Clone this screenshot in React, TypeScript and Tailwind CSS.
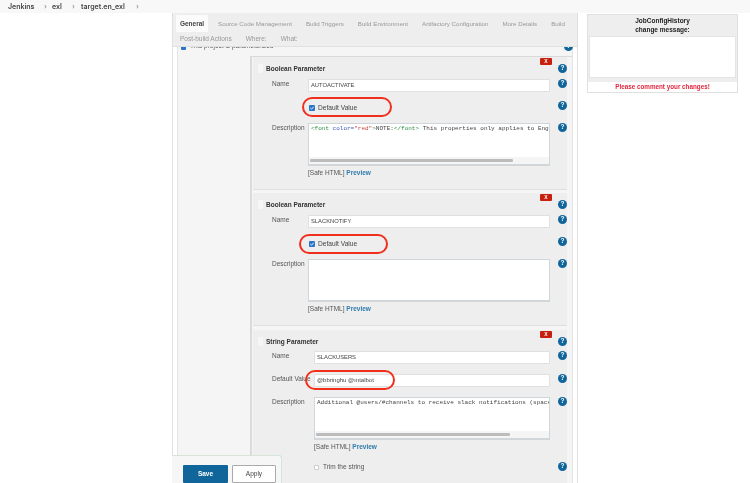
const font = "font-['Liberation_Sans',sans-serif]";

function Help() {
  return (
    <span className="flex h-[9px] w-[9px] shrink-0 items-center justify-center rounded-full bg-[#10659b] text-[6.5px] font-bold leading-none text-white">
      ?
    </span>
  );
}

function Ring({ className }: { className: string }) {
  return <div className={`pointer-events-none absolute h-[20px] rounded-[10px] border-2 border-[#f0301c] ${className}`} />;
}

function Check() {
  return (
    <span className="flex h-[6px] w-[6px] shrink-0 items-center justify-center rounded-[1px] bg-[#2a74c9]">
      <svg viewBox="0 0 6 6" className="h-[6px] w-[6px]">
        <path d="M1.3 3 L2.5 4.2 L4.7 1.8" fill="none" stroke="white" strokeWidth="0.9" />
      </svg>
    </span>
  );
}

function Row({ label, wide, top, height, children }: { label?: string; wide?: boolean; top: number; height: number; children: React.ReactNode }) {
  return (
    <div className="flex" style={{ marginTop: top, height }}>
      <div className={`shrink-0 whitespace-nowrap pl-[19px] text-[6.5px] leading-[9px] text-[#555] ${wide ? "w-[61px]" : "w-[55px]"}`}>
        {label}
      </div>
      <div className={`relative shrink-0 ${wide ? "w-[236px]" : "w-[242px]"}`}>{children}</div>
      <div className="ml-[8px]"><Help /></div>
    </div>
  );
}

function TextInput({ value, size }: { value: string; size: string }) {
  return (
    <div className={`flex h-[13px] items-center whitespace-nowrap rounded-[1px] border border-[#e0e0e0] bg-white pl-[2px] text-[#444] ${size}`}>
      {value}
    </div>
  );
}

function Editor({ children, scrollbar }: { children?: React.ReactNode; scrollbar?: number }) {
  return (
    <div className="h-[43px] overflow-hidden border border-b-2 border-[#d0d6da] bg-white">
      <div className="h-[33px] overflow-hidden whitespace-nowrap pl-[2px] pt-[1px] font-['Liberation_Mono',monospace] text-[6px] leading-[8px] text-[#444]">
        {children}
      </div>
      {scrollbar ? (
        <div className="h-[7px] bg-[#f5f5f5] pl-[1px] pt-[2px]">
          <div className="h-[3px] rounded-[1px] bg-[#bcbcbc]" style={{ width: scrollbar }} />
        </div>
      ) : null}
    </div>
  );
}

function SafeHtml({ wide }: { wide?: boolean }) {
  return (
    <div className={`mt-[2px] h-[9px] whitespace-nowrap text-[6.5px] leading-[9px] text-[#555] ${wide ? "ml-[61px]" : "ml-[55px]"}`}>
      [Safe HTML] <span className="font-bold text-[#2f7cad]">Preview</span>
    </div>
  );
}

function Block({ title, children }: { title: string; children: React.ReactNode }) {
  return (
    <div className="relative w-[314px] border-b border-[#e0e0e0]">
      <div className="absolute right-[15px] top-[1px] flex h-[7px] w-[12px] items-center justify-center rounded-[1px] bg-[#c8200f] text-[5px] font-bold text-white">
        X
      </div>
      <div className="flex h-[16px] items-end pl-[5px]">
        <span className="mr-[3px] h-[9px] w-[5px] bg-[#f5f5f5]" />
        <span className="mb-[-1px] whitespace-nowrap text-[6.5px] font-bold leading-[10px] text-[#333]">{title}</span>
        <span className="ml-auto"><Help /></span>
      </div>
      {children}
    </div>
  );
}

function DefaultCheck() {
  return (
    <div className="flex h-[13px] items-center whitespace-nowrap pl-[1px] text-[6.6px] text-[#444]">
      <span className="mr-[3px]"><Check /></span>
      Default Value
    </div>
  );
}

export default function App() {
  return (
    <div className={`relative flex h-[483px] w-[750px] flex-col overflow-hidden bg-white blur-[0.3px] ${font}`}>
      {/* Breadcrumb */}
      <div className="flex h-[13px] shrink-0 items-center whitespace-nowrap bg-[#f8f8f8] pl-[8px] font-['Inter',sans-serif] text-[7px] font-semibold leading-[10px] text-[#444]">
        <span className="w-[36px]">Jenkins</span>
        <span className="w-[8px] text-[#999]">›</span>
        <span className="w-[20px]">exl</span>
        <span className="w-[9px] text-[#999]">›</span>
        <span className="w-[55px]">target.en_exl</span>
        <span className="text-[#999]">›</span>
      </div>

      <div className="flex min-h-0 flex-1">
        <div className="w-[172px] shrink-0" />

        {/* Main config form */}
        <div className="relative flex h-full w-[406px] shrink-0 flex-col border-x border-[#e0e0e0]">
          <div className="relative z-10 h-[34px] shrink-0 border-b border-[#e0e0e0] bg-[#eeeeee] pl-[3px] pt-[2px] text-[6.5px] text-[#999]">
            <div className="flex h-[17px] items-center gap-[14px] whitespace-nowrap text-[6.2px]">
              <span className="mr-[-4px] flex h-[17px] w-[32px] items-center justify-center rounded-t-[2px] bg-[#fbfbfb] text-[6.5px] font-bold text-[#444]">General</span>
              <span>Source Code Management</span>
              <span>Build Triggers</span>
              <span>Build Environment</span>
              <span>Artifactory Configuration</span>
              <span>More Details</span>
              <span>Build</span>
            </div>
            <div className="flex h-[13px] items-center gap-[14px] whitespace-nowrap pl-[4px]">
              <span>Post-build Actions</span>
              <span>Where:</span>
              <span>What:</span>
            </div>
          </div>

          <div className="min-h-0 flex-1 overflow-hidden px-[4px]">
            <div className="h-full border-x border-[#e4e4e4] bg-[#f5f5f5]">
              <div className="flex h-[3px] items-end overflow-visible pl-[3px] text-[6.5px] leading-[8px] text-[#555]">
                <span className="mr-[4px] h-[5px] w-[5px] shrink-0 rounded-[1px] bg-[#2a74c9]" />
                <span className="whitespace-nowrap">This project is parameterized</span>
                <span className="mb-[-1px] ml-auto mr-[-1px]"><Help /></span>
              </div>
              <div className="ml-[72px] mt-[6px] h-[430px] border-l-[2px] border-t border-[#dadada] pl-[1px]">
                <div className="w-[314px] bg-[#eeeeee]">
                  <Block title="Boolean Parameter">
                    <Row label="Name" top={6} height={13}><TextInput value="AUTOACTIVATE" size="text-[5.8px]" /></Row>
                    <Row top={9} height={13}>
                      <DefaultCheck />
                      <Ring className="-left-[6px] -top-[4px] w-[90px]" />
                    </Row>
                    <Row label="Description" top={9} height={43}>
                      <Editor scrollbar={203}>
                        <span className="text-[#2f8f45]">&lt;font </span>
                        <span className="text-[#3c5bc4]">color=</span>
                        <span className="text-[#c9483c]">"red"</span>
                        <span className="text-[#2f8f45]">&gt;</span>NOTE:
                        <span className="text-[#2f8f45]">&lt;/font&gt;</span> This properties only applies to Eng
                      </Editor>
                    </Row>
                    <SafeHtml />
                    <div className="h-[12px]" />
                  </Block>
                  <div className="h-[3px] bg-[#f5f5f5]" />
                  <Block title="Boolean Parameter">
                    <Row label="Name" top={6} height={13}><TextInput value="SLACKNOTIFY" size="text-[5.8px]" /></Row>
                    <Row top={9} height={13}>
                      <DefaultCheck />
                      <Ring className="-left-[9px] -top-[3px] w-[89px]" />
                    </Row>
                    <Row label="Description" top={9} height={43}><Editor /></Row>
                    <SafeHtml />
                    <div className="h-[12px]" />
                  </Block>
                  <div className="h-[4px] bg-[#f5f5f5]" />
                  <Block title="String Parameter">
                    <Row label="Name" wide top={5} height={13}><TextInput value="SLACKUSERS" size="text-[5.8px]" /></Row>
                    <Row label="Default Value" wide top={10} height={13}>
                      <TextInput value="@bbringhu @mtalbot" size="text-[6px]" />
                      <Ring className="-left-[9px] -top-[4px] w-[90px]" />
                    </Row>
                    <Row label="Description" wide top={10} height={43}>
                      <Editor scrollbar={194}>Additional @users/#channels to receive slack notifications (space</Editor>
                    </Row>
                    <SafeHtml wide />
                    <Row wide top={11} height={30}>
                      <div className="flex h-[10px] items-center whitespace-nowrap text-[6.5px] text-[#555]">
                        <span className="mr-[4px] h-[5px] w-[5px] rounded-[1px] border border-[#ccc] bg-white" />
                        Trim the string
                      </div>
                    </Row>
                  </Block>
                </div>
              </div>
            </div>
          </div>
        </div>

        {/* JobConfigHistory panel */}
        <div className="ml-[9px] w-[151px] shrink-0 pt-[1px]">
          <div className="border border-[#e0e0e0]">
            <div className="bg-[#eeeeee] px-[1px] pb-[4px] pt-[1px] text-center text-[6.5px] font-bold leading-[9px] text-[#222]">
              <div className="h-[9px]">JobConfigHistory</div>
              <div className="h-[9px]">change message:</div>
              <div className="mt-[2px] h-[42px] border border-[#e4e4e4] bg-white" />
            </div>
            <div className="flex h-[10px] items-center justify-center bg-white text-[6.3px] font-bold text-[#e0263c]">
              Please comment your changes!
            </div>
          </div>
        </div>
      </div>

      {/* Sticky save bar */}
      <div className="absolute bottom-0 left-[172px] flex h-[28px] w-[110px] gap-[4px] rounded-tr-[3px] border-r border-t border-[#d5e5d7] bg-[#f6f6f6] pl-[11px] pt-[9px]">
        <div className="flex h-[18px] w-[45px] items-center justify-center rounded-[1px] bg-[#10659b] text-[6.5px] font-bold text-white">Save</div>
        <div className="flex h-[18px] w-[44px] items-center justify-center rounded-[1px] border border-[#aaa] bg-white text-[6.5px] text-[#444]">Apply</div>
      </div>
    </div>
  );
}
